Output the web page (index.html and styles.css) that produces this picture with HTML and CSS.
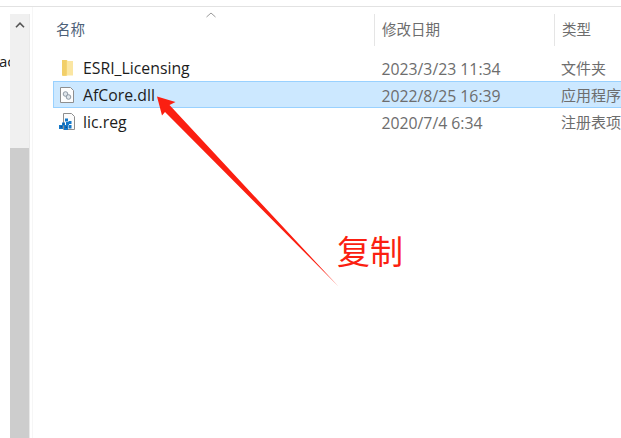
FILE: index.html
```html
<!DOCTYPE html>
<html lang="zh-CN">
<head>
<meta charset="utf-8">
<title>AfCore.dll</title>
<link rel="stylesheet" href="styles.css">
</head>
<body>
<div class="window">
  <div class="pane">
    <div class="nav-clip"><span class="nav-text">ac</span></div>
    <div class="scrollbar">
      <div class="scroll-track">
        <svg class="chevron" width="10" height="6" viewBox="0 0 10 6"><path d="M1 5.2 5 1.2 9 5.2" fill="none" stroke="#555" stroke-width="1.6"/></svg>
      </div>
      <div class="scroll-thumb"></div>
    </div>
    <div class="divider"></div>
  </div>
  <div class="list">
    <div class="head">
      <div class="cell name">名称
        <svg class="sort" width="10" height="6" viewBox="0 0 10 6"><path d="M.5 5 5 1l4.500 4" fill="none" stroke="#9a9a9a"/></svg>
      </div>
      <div class="cell date">修改日期</div>
      <div class="cell type">类型</div>
    </div>
    <div class="row">
      <div class="cell name">
        <svg class="icon" width="18" height="18" viewBox="0 0 18 18"><path d="M4 1h5l.5 1v14l-1 1H4.500z" fill="#f7d97c"/><path d="M9 2h6v14.500H9z" fill="#fbe6a2"/><path d="M4 1h4.500v14l-1 1.500H4z" fill="#f2cf69"/></svg>
        <span class="latin">ESRI_Licensing</span>
      </div>
      <div class="cell date latin">2023/3/23 11:34</div>
      <div class="cell type">文件夹</div>
    </div>
    <div class="row selected">
      <div class="cell name">
        <svg class="icon" width="18" height="18" viewBox="0 0 18 18"><path d="M2.500 1.500h10l3 3v12h-13z" fill="#fdfdfd" stroke="#8e8e8e"/><circle cx="7.500" cy="8" r="2.300" fill="#dfe5ea" stroke="#8f9aa5"/><circle cx="10.500" cy="11" r="2.300" fill="#dfe5ea" stroke="#8f9aa5"/></svg>
        <span class="latin">AfCore.dll</span>
      </div>
      <div class="cell date latin">2022/8/25 16:39</div>
      <div class="cell type">应用程序</div>
    </div>
    <div class="row">
      <div class="cell name">
        <svg class="icon" width="18" height="18" viewBox="0 0 18 18"><path d="M5.500 .5h8l3 3v13h-11z" fill="#fbfbfb" stroke="#8e8e8e"/><path d="M7 5.500h3v3H7zM10.500 8h3v3h-3zM8 9h3v3H8zM4 9.500h3v3H4zM1 12h4v4H1zM6 12h4v5H6zM10.500 12h3v3.500h-3z" fill="#1478c8"/><path d="M2.500 13h1.500v1.500H2.500zM7.500 13.500h1.500v1.500H7.500zM5 10.500h1v1H5z" fill="#0c4d8f"/></svg>
        <span class="latin">lic.reg</span>
      </div>
      <div class="cell date latin">2020/7/4 6:34</div>
      <div class="cell type">注册表项</div>
    </div>
  </div>
</div>
<svg class="arrow" width="621" height="438" viewBox="0 0 621 438"><polygon points="157,96.500 175.500,102 169.500,105 338.500,286.500 165,112 162,115.500" fill="#fb1f11"/></svg>
<div class="note">复制</div>
</body>
</html>
```
FILE: styles.css
```css
html, body {
  margin: 0;
  padding: 0;
  background: #fff;
  overflow: hidden;
}

body {
  width: 621px;
  height: 438px;
  position: relative;
  font-family: "Open Sans", "Noto Sans CJK SC", sans-serif;
}

.window {
  height: 431px;
  margin-top: 6px;
  border-top: 1px solid #e2e2e2;
  display: flex;
}

.pane {
  width: 53px;
  flex: none;
  display: flex;
  position: relative;
}

.nav-clip {
  width: 10px;
  overflow: hidden;
  padding-top: 44px;
  font-size: 15px;
  line-height: 20px;
  color: #222;
}

.nav-text {
  display: block;
  margin-left: -1px;
}

.scrollbar {
  width: 19px;
  margin-top: 7px;
  display: flex;
  flex-direction: column;
  background: #f0f0f0;
  border-right: 1px solid #e9e9e9;
}

.scroll-track {
  height: 134px;
  display: flex;
  justify-content: center;
  padding-top: 8px;
  box-sizing: border-box;
}

.chevron {
  display: block;
}

.scroll-thumb {
  flex: 1;
  background: #cdcdcd;
}

.divider {
  width: 1px;
  margin-left: 2px;
  background: #f6f6f6;
}

.list {
  flex: 1;
  min-width: 0;
  font-size: 15px;
}

.head {
  display: flex;
  height: 32px;
  margin: 7px 0 8px;
  color: #4d6078;
  font-size: 14.500px;
}

.head .cell {
  height: 32px;
  line-height: 32px;
}

.head .date,
.head .type {
  border-left: 1px solid #e5e5e5;
}

.head .name {
  position: relative;
  color: #4d6078;
  padding-left: 3px;
}

.sort {
  position: absolute;
  left: 153px;
  top: -2px;
}

.cell {
  box-sizing: border-box;
  white-space: nowrap;
}

.name {
  width: 321px;
  padding-left: 4px;
  display: flex;
  align-items: center;
  color: #1c1c1c;
}

.date {
  width: 180px;
  padding-left: 7px;
  color: #6d6d6d;
}

.type {
  width: 67px;
  padding-left: 7px;
  color: #6d6d6d;
  overflow: hidden;
}

.latin {
  font-size: 15.800px;
  position: relative;
  top: 1px;
}

.row {
  display: flex;
  height: 27px;
  line-height: 27px;
  box-sizing: border-box;
  border: 1px solid transparent;
  border-right: 0;
}

.selected {
  background: #cce8ff;
  border-color: #99d1ff;
}

.icon {
  flex: none;
  margin-right: 7px;
}

.arrow {
  position: absolute;
  left: 0;
  top: 0;
  pointer-events: none;
}

.note {
  position: absolute;
  left: 337px;
  top: 228px;
  font-family: "Noto Sans CJK SC", sans-serif;
  font-size: 33px;
  font-weight: 400;
  line-height: 44px;
  color: #fb1f11;
}
```
